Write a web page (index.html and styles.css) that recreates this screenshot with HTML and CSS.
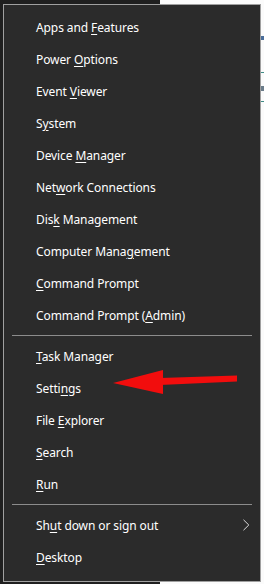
FILE: index.html
```html
<!DOCTYPE html>
<html lang="en">
<head>
  <meta charset="UTF-8" />
  <meta name="viewport" content="width=device-width, initial-scale=1.0" />
  <title>Quick Link Menu</title>
  <link rel="stylesheet" href="styles.css">
</head>
<body>
  <div class="screen">
    <div class="behind">
      <span class="mark mark-blue"></span>
      <span class="mark mark-teal"></span>
      <span class="mark mark-gray"></span>
      <span class="mark mark-teal2"></span>
    </div>

    <nav class="menu">
      <div class="group">
        <div class="item"><span>Apps and <u>F</u>eatures</span></div>
        <div class="item"><span>Power <u>O</u>ptions</span></div>
        <div class="item"><span>Event <u>V</u>iewer</span></div>
        <div class="item"><span>S<u>y</u>stem</span></div>
        <div class="item"><span>Device <u>M</u>anager</span></div>
        <div class="item"><span>Net<u>w</u>ork Connections</span></div>
        <div class="item"><span>Dis<u>k</u> Management</span></div>
        <div class="item"><span>Computer Mana<u>g</u>ement</span></div>
        <div class="item"><span><u>C</u>ommand Prompt</span></div>
        <div class="item"><span>Command Prompt (<u>A</u>dmin)</span></div>
      </div>
      <div class="sep"></div>
      <div class="group">
        <div class="item"><span><u>T</u>ask Manager</span></div>
        <div class="item"><span>Setti<u>n</u>gs</span></div>
        <div class="item"><span>File <u>E</u>xplorer</span></div>
        <div class="item"><span><u>S</u>earch</span></div>
        <div class="item"><span><u>R</u>un</span></div>
      </div>
      <div class="sep"></div>
      <div class="group">
        <div class="item has-sub">
          <span>Sh<u>u</u>t down or sign out</span>
          <svg class="chevron" width="8" height="12" viewBox="0 0 8 12">
            <path d="M1.5 0.8 L6.8 6 L1.5 11.2" fill="none" stroke="#dcdcdc" stroke-width="1"/>
          </svg>
        </div>
        <div class="item"><span><u>D</u>esktop</span></div>
      </div>

      <!-- red annotation arrow pointing at Settings -->
      <svg class="arrow" width="130" height="30" viewBox="0 0 130 30">
        <polygon points="0,15 50,2 50,26" fill="#f20d0d"/>
        <polygon points="47,10 124,7.5 124,13.5 47,17" fill="#f20d0d"/>
      </svg>
    </nav>
  </div>
</body>
</html>
```

FILE: styles.css
```css
:root {
  --menu-bg: #2b2b2b;
  --menu-text: #ffffff;
  --menu-border: #a0a0a0;
  --sep: #8c8c8c;
}

html, body {
  margin: 0;
  padding: 0;
}

body {
  width: 264px;
  height: 584px;
  overflow: hidden;
  font-family: 'Noto Sans', 'Open Sans', sans-serif;
}

.screen {
  position: relative;
  height: 584px;
  padding: 4px 0 0 3px;
  box-sizing: border-box;
  background: linear-gradient(to right, #1f1f1f 160px, #fbfbfb 160px);
}

.behind {
  position: absolute;
  top: 0;
  right: 0;
  width: 4px;
  height: 584px;
}

.mark {
  position: absolute;
  right: 0;
  width: 3px;
  height: 1px;
}

.mark-blue { top: 36px; height: 4px; background: #4a6d9a; }
.mark-teal { top: 72px; background: #3f8c86; }
.mark-gray { top: 86px; height: 5px; background: #6b7c8a; }
.mark-teal2 { top: 101px; background: #3f8c86; }

.menu {
  position: relative;
  width: 258px;
  box-sizing: border-box;
  background: var(--menu-bg);
  border: 1px solid var(--menu-border);
  padding: 6px 0 8px;
  color: var(--menu-text);
}

.item {
  height: 32px;
  display: flex;
  align-items: center;
  padding-left: 32px;
  padding-right: 10px;
  font-size: 12px;
  letter-spacing: -0.1px;
  white-space: nowrap;
}

.item u {
  text-underline-offset: 2px;
  text-decoration-thickness: 1px;
}

.has-sub {
  justify-content: space-between;
}

.chevron {
  display: block;
}

.sep {
  height: 1px;
  margin: 4px 8px 4px 8px;
  background: var(--sep);
}

.arrow {
  position: absolute;
  left: 109px;
  top: 363px;
}
```
